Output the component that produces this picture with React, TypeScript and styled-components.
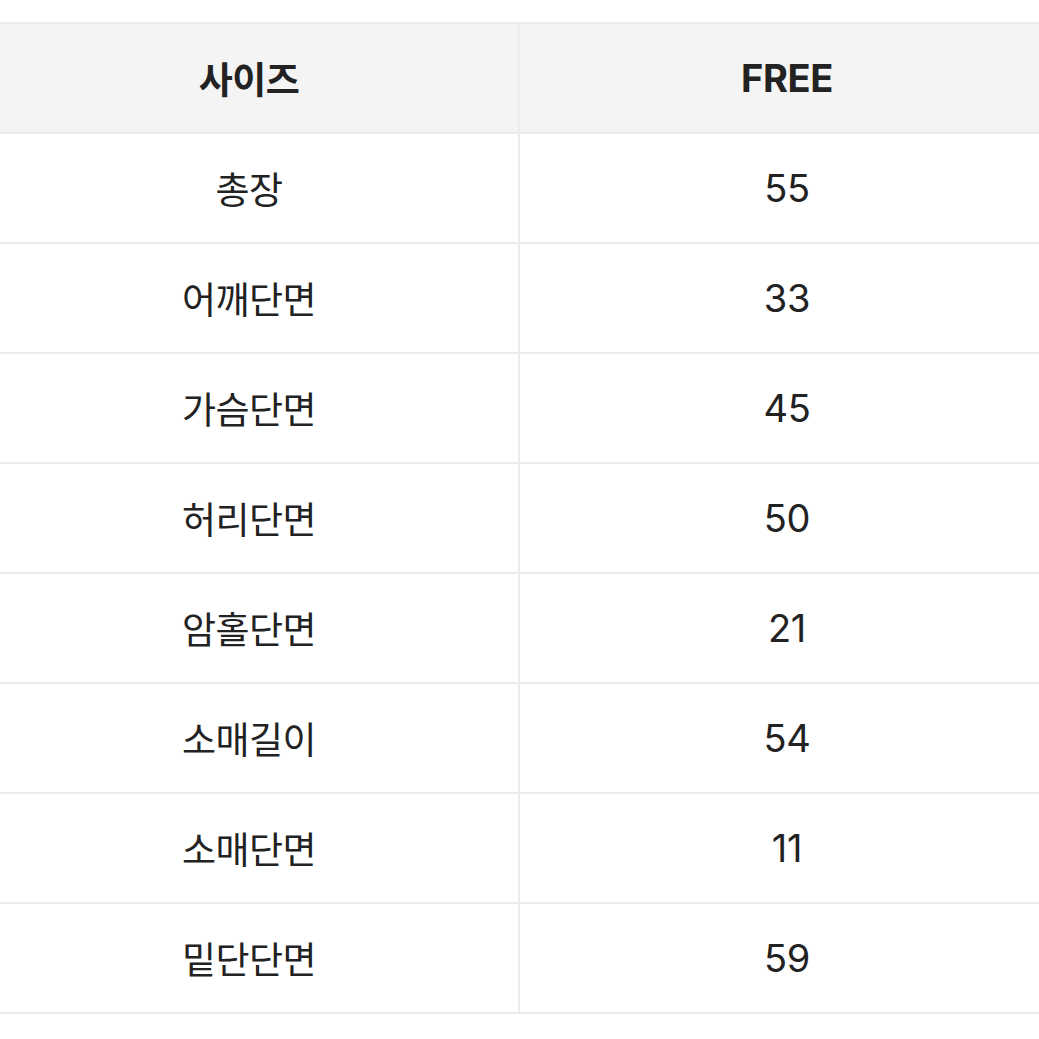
import React from "react";
import styled, { createGlobalStyle } from "styled-components";

const Global = createGlobalStyle`
  html, body { margin: 0; padding: 0; background: #ffffff; overflow: hidden; }
  body { font-family: "Noto Sans CJK KR", "Noto Sans", sans-serif; }
`;

const Page = styled.div`
  width: 1039px;
  height: 1039px;
  padding-top: 22px;
  box-sizing: border-box;
  overflow: hidden;
`;

const Table = styled.table`
  margin-left: -20px;
  width: 1074px;
  border-collapse: collapse;
  table-layout: fixed;
  border-top: 2px solid #ececec;
  border-bottom: 2px solid #ececec;
`;

const Row = styled.tr`
  height: 110px;
  border-bottom: 2px solid #ececec;
  &:last-child { border-bottom: none; }
`;

const Cell = styled.td<{ $head?: boolean; $first?: boolean }>`
  padding: 0;
  text-align: center;
  vertical-align: middle;
  line-height: 1;
  color: #222222;
  font-family: ${(p) =>
    p.$first
      ? `"Noto Sans CJK KR", sans-serif`
      : `Inter, "Noto Sans CJK KR", sans-serif`};
  font-size: ${(p) => (p.$first ? "37px" : "38px")};
  font-weight: ${(p) => (p.$head ? 700 : 400)};
  background: ${(p) => (p.$head ? "#f4f4f4" : "#ffffff")};
  border-right: ${(p) => (p.$first ? "2px solid #ececec" : "none")};
  width: ${(p) => (p.$first ? "538px" : "auto")};
  letter-spacing: ${(p) => (p.$first ? "-0.5px" : "-0.3px")};
`;

const rows: [string, string][] = [
  ["총장", "55"],
  ["어깨단면", "33"],
  ["가슴단면", "45"],
  ["허리단면", "50"],
  ["암홀단면", "21"],
  ["소매길이", "54"],
  ["소매단면", "11"],
  ["밑단단면", "59"],
];

export default function App() {
  return (
    <Page>
      <Global />
      <Table>
        <tbody>
          <Row>
            <Cell $head $first>사이즈</Cell>
            <Cell $head>FREE</Cell>
          </Row>
          {rows.map(([k, v]) => (
            <Row key={k}>
              <Cell $first>{k}</Cell>
              <Cell>{v}</Cell>
            </Row>
          ))}
        </tbody>
      </Table>
    </Page>
  );
}
